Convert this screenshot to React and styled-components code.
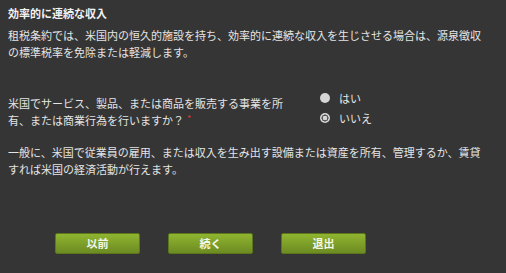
import React from 'react'
import styled, { createGlobalStyle } from 'styled-components'

const GlobalStyle = createGlobalStyle`
	html, body {
		margin: 0;
		padding: 0;
		background: #353535;
	}
	body {
		font-family: "Noto Sans CJK JP", "Noto Sans", sans-serif;
		color: #e4e4e4;
		font-size: 11px;
	}
`

const Page = styled.div`
	width: 506px;
	height: 273px;
	box-sizing: border-box;
	padding: 5px 24px 0 8px;
	background: #353535;
	overflow: hidden;
`

const Title = styled.div`
	font-weight: bold;
	color: #f2f2f2;
	line-height: 17px;
	margin-bottom: 5px;
`

const Paragraph = styled.p`
	margin: 0;
	line-height: 17px;
	margin-top: ${(p) => p.top || 0}px;
`

const QuestionRow = styled.div`
	display: flex;
	align-items: flex-start;
	margin-top: 27px;
`

const Question = styled.div`
	width: 280px;
	padding-top: 7px;
	line-height: 17px;
`

const Required = styled.span`
	display: inline-block;
	color: #e03333;
	font-size: 9px;
	line-height: 9px;
	vertical-align: top;
	margin-top: 2px;
	margin-left: 3px;
`

const RadioGroup = styled.div`
	margin-left: 32px;
	display: flex;
	flex-direction: column;
`

const RadioItem = styled.label`
	display: flex;
	align-items: center;
	height: 20px;
	gap: 9px;
`

const RadioDot = styled.span`
	width: 10px;
	height: 10px;
	border-radius: 50%;
	background: ${(p) =>
		p.checked
			? 'radial-gradient(circle, #d6d6d6 0 2px, #5a5a5a 2.5px 3.3px, #d6d6d6 3.8px)'
			: '#d6d6d6'};
`

const ButtonRow = styled.div`
	display: flex;
	gap: 28px;
	padding-left: 47px;
	margin-top: 55px;
`

const Button = styled.button`
	width: 85px;
	height: 21px;
	padding: 0;
	border: 1px solid #5c761b;
	border-radius: 2px;
	background: linear-gradient(#8fb530, #6c8b22);
	color: #f4f6e8;
	font-family: "Noto Sans CJK JP", "Noto Sans", sans-serif;
	font-size: 11px;
	font-weight: bold;
	line-height: 19px;
`

export default function App() {
	return (
		<>
			<GlobalStyle />
			<Page>
				<Title>効率的に連続な収入</Title>
				<Paragraph>
					租税条約では、米国内の恒久的施設を持ち、効率的に連続な収入を生じさせる場合は、源泉徴収の標準税率を免除または軽減します。
				</Paragraph>
				<QuestionRow>
					<Question>
						米国でサービス、製品、または商品を販売する事業を所有、または商業行為を行いますか？
						<Required>*</Required>
					</Question>
					<RadioGroup>
						<RadioItem>
							<RadioDot />
							はい
						</RadioItem>
						<RadioItem>
							<RadioDot checked />
							いいえ
						</RadioItem>
					</RadioGroup>
				</QuestionRow>
				<Paragraph top={15}>
					一般に、米国で従業員の雇用、または収入を生み出す設備または資産を所有、管理するか、賃貸すれば米国の経済活動が行えます。
				</Paragraph>
				<ButtonRow>
					<Button>以前</Button>
					<Button>続く</Button>
					<Button>退出</Button>
				</ButtonRow>
			</Page>
		</>
	)
}
